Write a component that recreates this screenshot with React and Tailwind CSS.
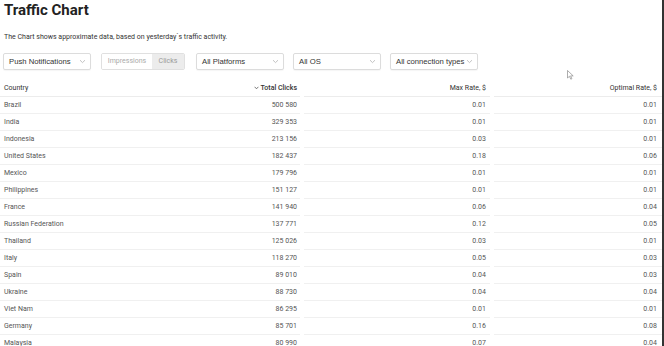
import React from "react";

const rows = [
  ["Brazil", "500 580", "0.01", "0.01"],
  ["India", "329 353", "0.01", "0.01"],
  ["Indonesia", "213 156", "0.03", "0.01"],
  ["United States", "182 437", "0.18", "0.06"],
  ["Mexico", "179 796", "0.01", "0.01"],
  ["Philippines", "151 127", "0.01", "0.01"],
  ["France", "141 940", "0.06", "0.04"],
  ["Russian Federation", "137 771", "0.12", "0.05"],
  ["Thailand", "125 026", "0.03", "0.01"],
  ["Italy", "118 270", "0.05", "0.03"],
  ["Spain", "89 010", "0.04", "0.03"],
  ["Ukraine", "88 730", "0.04", "0.04"],
  ["Viet Nam", "86 295", "0.01", "0.01"],
  ["Germany", "85 701", "0.16", "0.08"],
  ["Malaysia", "80 990", "0.07", "0.04"],
];

function Chevron() {
  return (
    <svg width="7" height="5" viewBox="0 0 7 5" className="text-[#bbb] shrink-0">
      <path d="M1 1.2 L3.5 3.6 L6 1.2" fill="none" stroke="currentColor" strokeWidth="0.9" />
    </svg>
  );
}

function Dropdown({ label }) {
  return (
    <div className="w-[88px] h-[17px] flex items-center justify-between pl-[5px] pr-[4px] border border-[#dcdcdc] rounded-[2px] bg-white shadow-[0_1px_1px_rgba(0,0,0,0.04)]">
      <span className="whitespace-nowrap text-[7.7px] text-[#333] font-['Liberation_Sans',Arial,sans-serif]">{label}</span>
      <Chevron />
    </div>
  );
}

export default function App() {
  return (
    <div className="w-[664px] h-[346px] overflow-hidden bg-white relative font-['Roboto',sans-serif]">
      {/* HEADER */}
      <div className="pl-[4px] pt-[1px]">
        <h1 className="text-[15px] leading-[18px] font-bold text-[#222]">Traffic Chart</h1>
        <p className="mt-[13px] text-[7px] leading-[10px] text-[#333]">
          The Chart shows approximate data, based on yesterday´s traffic activity.
        </p>
      </div>

      {/* FILTERS */}
      <div className="flex items-center mt-[11px] pl-[3px]">
        <Dropdown label="Push Notifications" />
        <div className="ml-[10px] flex h-[17px] border border-[#e0e0e0] rounded-[2px] overflow-hidden">
          <div className="w-[50px] flex items-center justify-center bg-white text-[7px] text-[#aaa]">Impressions</div>
          <div className="w-[32px] flex items-center justify-center bg-[#ececec] text-[7px] text-[#999]">Clicks</div>
        </div>
        <div className="ml-[11px]">
          <Dropdown label="All Platforms" />
        </div>
        <div className="ml-[9px]">
          <Dropdown label="All OS" />
        </div>
        <div className="ml-[9px]">
          <Dropdown label="All connection types" />
        </div>
      </div>

      {/* TABLE */}
      <div className="mt-[10px] grid grid-cols-[300px_190px_1fr] text-[7px]">
        <div className="h-[17px] flex items-center justify-between pl-[4px] pr-[3px] border-b border-[#ececec] text-[#333]">
          <span>Country</span>
          <span className="flex items-center gap-[2px] font-medium">
            <svg width="5" height="4" viewBox="0 0 5 4">
              <path d="M0.6 0.8 L2.5 2.8 L4.4 0.8" fill="none" stroke="#555" strokeWidth="0.8" />
            </svg>
            Total Clicks
          </span>
        </div>
        <div className="h-[17px] flex items-center justify-end pr-[4px] ml-[4px] border-b border-[#ececec] text-[#333]">
          Max Rate, $
        </div>
        <div className="h-[17px] flex items-center justify-end pr-[7px] ml-[4px] border-b border-[#ececec] text-[#333]">
          Optimal Rate, $
        </div>
        {rows.map((r) => (
          <React.Fragment key={r[0]}>
            <div className="h-[17px] flex items-center justify-between pl-[4px] pr-[3px] border-b border-[#f0f0f0] text-[#555]">
              <span>{r[0]}</span>
              <span>{r[1]}</span>
            </div>
            <div className="h-[17px] flex items-center justify-end pr-[4px] ml-[4px] border-b border-[#f0f0f0] text-[#555]">
              {r[2]}
            </div>
            <div className="h-[17px] flex items-center justify-end pr-[7px] ml-[4px] border-b border-[#f0f0f0] text-[#555]">
              {r[3]}
            </div>
          </React.Fragment>
        ))}
      </div>

      {/* right edge bar */}
      <div className="absolute top-0 right-0 w-[2px] h-full bg-[#333]" />

      {/* cursor */}
      <svg className="absolute left-[567px] top-[70px]" width="7" height="10" viewBox="0 0 7 10">
        <path d="M0.5 0.5 L0.5 8 L2.4 6.3 L3.8 9.2 L4.9 8.7 L3.6 5.9 L6.2 5.9 Z" fill="#fff" stroke="#777" strokeWidth="0.6" />
      </svg>
    </div>
  );
}
